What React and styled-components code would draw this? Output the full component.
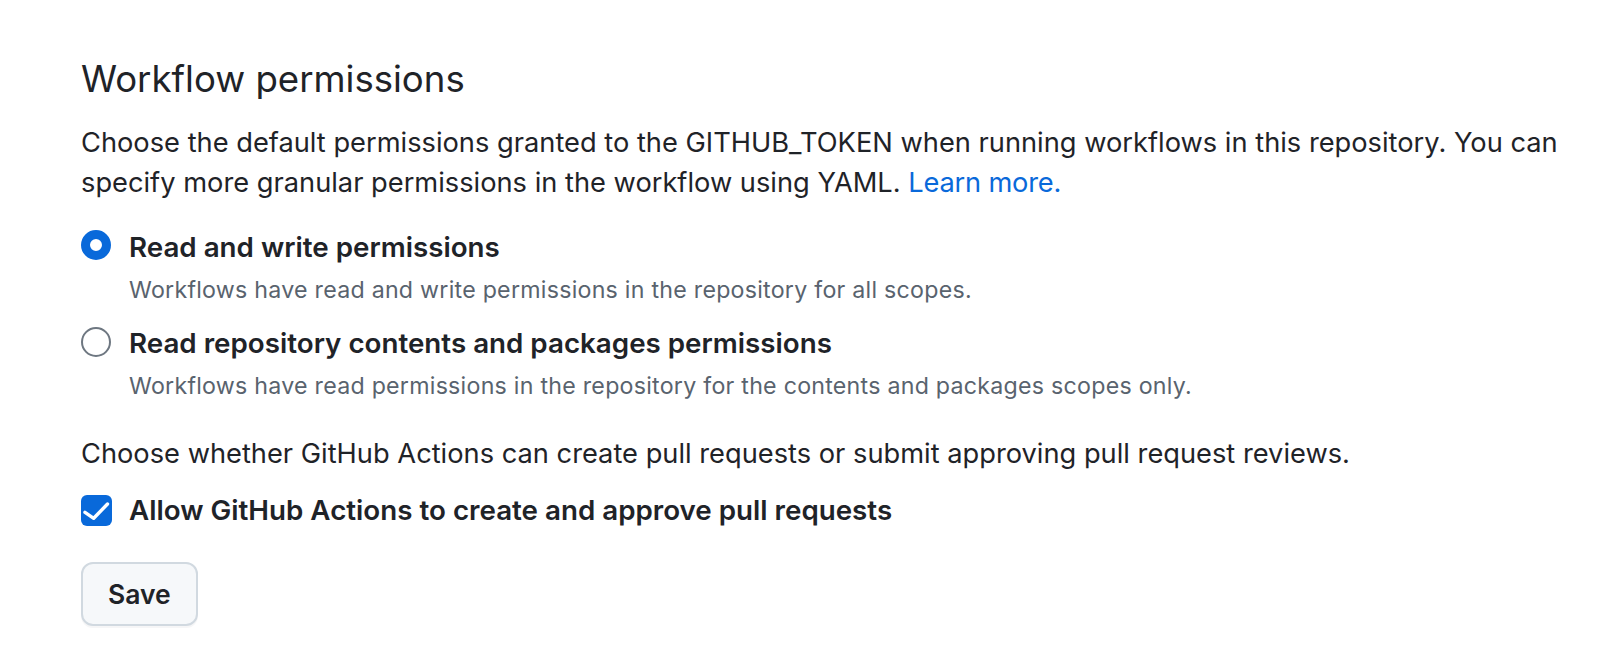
import React from "react";
import styled, { createGlobalStyle } from "styled-components";

const Global = createGlobalStyle`
  html, body { margin: 0; padding: 0; background: #ffffff; }
  body { font-family: Inter, "Noto Sans", sans-serif; color: #1f2328; }
`;

const Page = styled.main`
  padding: 55.5px 40px 40px 81px;
`;

const Heading = styled.h2`
  margin: 0;
  font-size: 36.6px;
  line-height: 46px;
  font-weight: 400;
  color: #1f2328;
`;

const Text = styled.p`
  margin: ${(p) => p.$mt || 0}px 0 0;
  font-size: 27.25px;
  line-height: 40px;
  color: #1f2328;
`;

const Link = styled.a`
  color: #0969da;
  text-decoration: none;
  letter-spacing: -0.2px;
`;

const Options = styled.div`
  display: flex;
  flex-direction: column;
  gap: ${(p) => p.$gap}px;
  margin-top: ${(p) => p.$mt}px;
`;

const Option = styled.label`
  display: grid;
  grid-template-columns: 32px 1fr;
  column-gap: 16px;
  align-items: start;
`;

const Control = styled.span`
  display: flex;
  align-items: center;
  justify-content: flex-start;
  height: 40px;
  margin-top: ${(p) => p.$offset || 0}px;
`;

const Radio = styled.span`
  box-sizing: border-box;
  width: 30px;
  height: 30px;
  border-radius: 50%;
  background: #ffffff;
  border: ${(p) => (p.$checked ? "9px solid #0969da" : "2px solid #6e7781")};
`;

const Checkbox = styled.span`
  box-sizing: border-box;
  width: 31px;
  height: 31px;
  border-radius: 6px;
  background: #0969da;
  display: flex;
  align-items: center;
  justify-content: center;
`;

const Body = styled.span`
  display: flex;
  flex-direction: column;
  gap: 5.6px;
`;

const Label = styled.span`
  font-size: 27.75px;
  line-height: 40px;
  font-weight: 600;
  color: #1f2328;
`;

const Note = styled.span`
  font-size: 23.2px;
  line-height: 34px;
  letter-spacing: 0.25px;
  color: #59636e;
`;

const Button = styled.button`
  margin-top: 32px;
  box-sizing: border-box;
  height: 64px;
  padding: 0 25px;
  font-family: inherit;
  font-size: 26.5px;
  font-weight: 600;
  color: #1f2328;
  background: #f6f8fa;
  border: 2px solid #d1d9e0;
  border-radius: 12px;
  box-shadow: 0 2px 0 rgba(31, 35, 40, 0.04);
`;

function Check() {
  return (
    <svg width="31" height="31" viewBox="0 0 31 31" fill="none">
      <path d="M4 17.3 L12.7 23.3 L26.5 9" stroke="#fff" strokeWidth="3.4" strokeLinecap="round" strokeLinejoin="round" />
    </svg>
  );
}

export default function App() {
  return (
    <>
      <Global />
      <Page>
        <Heading>Workflow permissions</Heading>
        <Text $mt={21.7}>
          Choose the default permissions granted to the GITHUB_TOKEN when running workflows in this repository. You can
          specify more granular permissions in the workflow using YAML. <Link href="#">Learn more.</Link>
        </Text>
        <Options $gap={16.4} $mt={24}>
          <Option>
            <Control $offset={-2}><Radio $checked /></Control>
            <Body>
              <Label>Read and write permissions</Label>
              <Note>Workflows have read and write permissions in the repository for all scopes.</Note>
            </Body>
          </Option>
          <Option>
            <Control $offset={-1.5}><Radio /></Control>
            <Body>
              <Label>Read repository contents and packages permissions</Label>
              <Note>Workflows have read permissions in the repository for the contents and packages scopes only.</Note>
            </Body>
          </Option>
        </Options>
        <Text $mt={31.4}>
          Choose whether GitHub Actions can create pull requests or submit approving pull request reviews.
        </Text>
        <Options $gap={0} $mt={16}>
          <Option>
            <Control><Checkbox><Check /></Checkbox></Control>
            <Label>Allow GitHub Actions to create and approve pull requests</Label>
          </Option>
        </Options>
        <Button>Save</Button>
      </Page>
    </>
  );
}
